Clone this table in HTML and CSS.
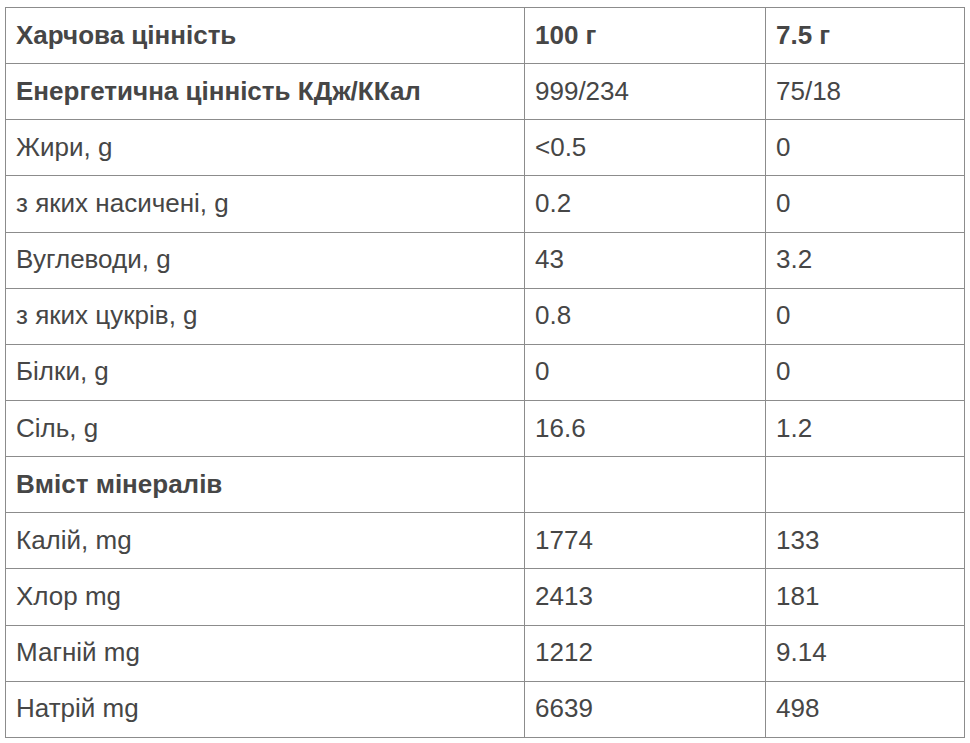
FILE: index.html
```html
<!DOCTYPE html>
<html lang="uk">
<head>
<meta charset="utf-8">
<title>Харчова цінність</title>
<link rel="stylesheet" href="styles.css">
</head>
<body>
<table class="nutrition">
  <colgroup>
    <col class="c1"><col class="c2"><col class="c3">
  </colgroup>
  <tbody>
    <tr class="bold"><td>Харчова цінність</td><td>100 г</td><td>7.5 г</td></tr>
    <tr><td class="b">Енергетична цінність КДж/ККал</td><td>999/234</td><td>75/18</td></tr>
    <tr><td>Жири, g</td><td>&lt;0.5</td><td>0</td></tr>
    <tr><td>з яких насичені, g</td><td>0.2</td><td>0</td></tr>
    <tr><td>Вуглеводи, g</td><td>43</td><td>3.2</td></tr>
    <tr><td>з яких цукрів, g</td><td>0.8</td><td>0</td></tr>
    <tr><td>Білки, g</td><td>0</td><td>0</td></tr>
    <tr><td>Сіль, g</td><td>16.6</td><td>1.2</td></tr>
    <tr><td class="b">Вміст мінералів</td><td></td><td></td></tr>
    <tr><td>Калій, mg</td><td>1774</td><td>133</td></tr>
    <tr><td>Хлор mg</td><td>2413</td><td>181</td></tr>
    <tr><td>Магній mg</td><td>1212</td><td>9.14</td></tr>
    <tr><td>Натрій mg</td><td>6639</td><td>498</td></tr>
  </tbody>
</table>
</body>
</html>
```
FILE: styles.css
```css
html, body {
  margin: 0;
  padding: 0;
  background: #ffffff;
}
body {
  padding: 7px 0 0 5px;
  font-family: "Liberation Sans", Arial, sans-serif;
  color: #464646;
}
.nutrition {
  border-collapse: collapse;
  width: 959px;
  table-layout: fixed;
  font-size: 26px;
  line-height: 30px;
}
.c1 { width: 519px; }
.c2 { width: 241px; }
.c3 { width: 199px; }
.nutrition tr {
  height: 56.15px;
}
.nutrition td {
  border: 1px solid #8c8c8c;
  padding: 0 10px 2px;
  vertical-align: middle;
  text-align: left;
}
.bold td, .nutrition td.b {
  font-weight: bold;
}
```
